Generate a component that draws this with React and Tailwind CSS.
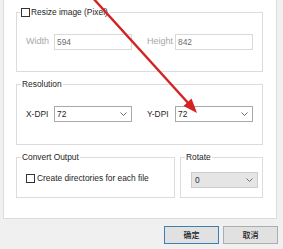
import React from "react";

const Chevron = () => (
  <svg width="7" height="4" viewBox="0 0 7 4" className="shrink-0">
    <polyline points="0.5,0.5 3.5,3.5 6.5,0.5" fill="none" stroke="#707070" strokeWidth="1" />
  </svg>
);

const CheckBox = () => (
  <div className="w-[9px] h-[9px] border border-[#333333] bg-white shrink-0" />
);

function Legend({ children, className = "" }) {
  return (
    <div className={"-mt-[7px] h-[12px] w-fit bg-white px-[1px] flex items-center text-[#1e1e1e] leading-[12px] " + className}>
      {children}
    </div>
  );
}

export default function App() {
  return (
    <div className="relative w-[283px] h-[249px] overflow-hidden bg-[#f0f0f0] font-['Liberation_Sans',Arial,sans-serif] text-[8.4px]">
      <div className="ml-[3px] w-[274px] h-[219px] bg-white border-l border-r border-b border-[#dcdcdc] pl-[12px] pt-[12px] flex flex-col">
        {/* Resize image group */}
        <div className="w-[247px] h-[60px] border border-[#dcdcdc] flex flex-col">
          <Legend className="ml-[3px]">
            <CheckBox />
            <span className="ml-[1px]">Resize image (Pixel)</span>
          </Legend>
          <div className="mt-[16px] flex items-center h-[16px] pl-[9px]">
            <span className="w-[28px] text-[9px] text-[#a8a8a8]">Width</span>
            <div className="w-[78px] h-[16px] border border-[#d9d9d9] pl-[2px] flex items-center text-[#6d6d6d]">594</div>
            <span className="ml-[15px] w-[28px] text-[9px] text-[#a8a8a8]">Height</span>
            <div className="w-[78px] h-[16px] border border-[#d9d9d9] pl-[2px] flex items-center text-[#6d6d6d]">842</div>
          </div>
        </div>

        {/* Resolution group */}
        <div className="mt-[12px] w-[247px] h-[61px] border border-[#dcdcdc] flex flex-col">
          <Legend className="ml-[4px]">Resolution</Legend>
          <div className="mt-[16px] flex items-center h-[16px] pl-[9px] text-[#1e1e1e]">
            <span className="w-[28px]">X-DPI</span>
            <div className="w-[78px] h-[16px] border border-[#a9a9a9] pl-[2px] pr-[4px] flex items-center justify-between">
              <span>72</span>
              <Chevron />
            </div>
            <span className="ml-[15px] w-[28px]">Y-DPI</span>
            <div className="w-[78px] h-[16px] border border-[#a9a9a9] pl-[2px] pr-[4px] flex items-center justify-between">
              <span>72</span>
              <Chevron />
            </div>
          </div>
        </div>

        {/* Convert Output + Rotate */}
        <div className="mt-[12px] flex gap-[5px]">
          <div className="w-[159px] h-[41px] border border-[#dcdcdc] flex flex-col">
            <Legend className="ml-[4px]">Convert Output</Legend>
            <div className="mt-[11px] ml-[9px] flex items-center h-[9px] text-[#1e1e1e]">
              <CheckBox />
              <span className="ml-[2px]">Create directories for each file</span>
            </div>
          </div>
          <div className="w-[83px] h-[41px] border border-[#dcdcdc] flex flex-col">
            <Legend className="ml-[4px]">Rotate</Legend>
            <div className="mt-[9px] ml-[10px] w-[67px] h-[16px] bg-[#e5e5e5] border border-[#cccccc] pl-[3px] pr-[4px] flex items-center justify-between text-[#333333]">
              <span>0</span>
              <Chevron />
            </div>
          </div>
        </div>
      </div>

      {/* Buttons */}
      <div className="mt-[7px] flex justify-end gap-[4px] pr-[5px] font-['Noto_Sans_CJK_SC',sans-serif] text-[8px] font-medium text-[#222222]">
        <div className="w-[55px] h-[18px] bg-[#e1e1e1] border border-[#3c7fb1] flex items-center justify-center">确定</div>
        <div className="w-[55px] h-[18px] bg-[#e1e1e1] border border-[#adadad] flex items-center justify-center">取消</div>
      </div>

      {/* Red annotation arrow */}
      <svg className="absolute inset-0 pointer-events-none" width="283" height="249" viewBox="0 0 283 249">
        <line x1="92" y1="-3" x2="189" y2="104" stroke="#d42222" strokeWidth="2.4" />
        <polygon points="197,113 183.5,106 191.5,98.5" fill="#d42222" />
      </svg>
    </div>
  );
}
